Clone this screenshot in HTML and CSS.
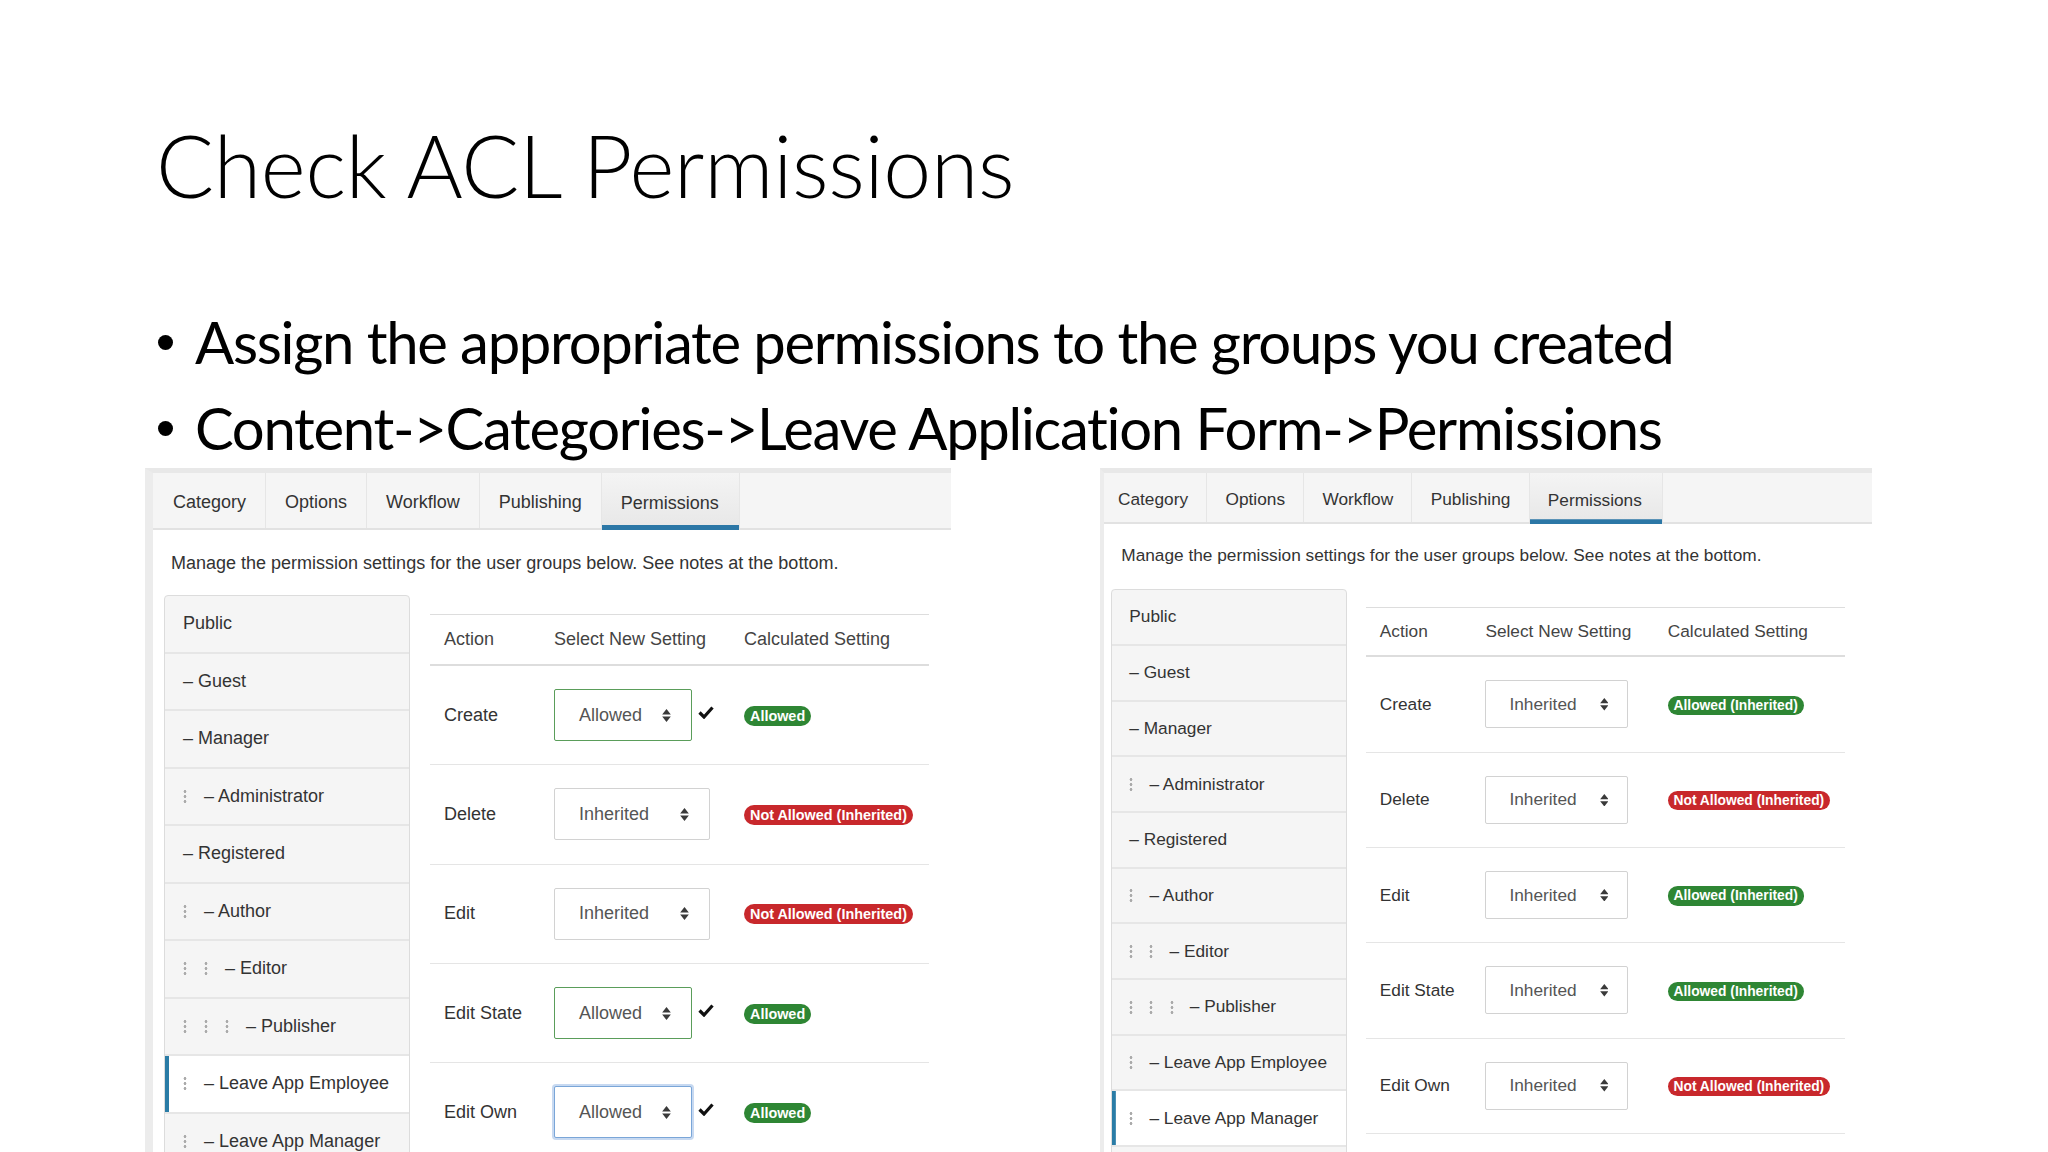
FILE: index.html
```html
<!DOCTYPE html>
<html lang="en">
<head>
<meta charset="utf-8">
<title>Check ACL Permissions</title>
<link rel="stylesheet" href="styles.css">
</head>
<body>
<div class="slide">
  <h1 class="title">Check ACL Permissions</h1>
  <ul class="bullets">
    <li><span class="dot"></span><span>Assign the appropriate permissions to the groups you created</span></li>
    <li><span class="dot"></span><span>Content-&gt;Categories-&gt;Leave Application Form-&gt;Permissions</span></li>
  </ul>

  <div class="shots">
    <!-- LEFT SCREENSHOT -->
    <section class="panel panel-left">
      <nav class="tabs">
        <span class="tab">Category</span>
        <span class="tab">Options</span>
        <span class="tab">Workflow</span>
        <span class="tab">Publishing</span>
        <span class="tab active">Permissions</span>
      </nav>
      <p class="desc">Manage the permission settings for the user groups below. See notes at the bottom.</p>
      <div class="perm">
        <ul class="groups">
          <li class="grp">Public</li>
          <li class="grp">&ndash; Guest</li>
          <li class="grp">&ndash; Manager</li>
          <li class="grp"><span class="gi"></span><span>&ndash; Administrator</span></li>
          <li class="grp">&ndash; Registered</li>
          <li class="grp"><span class="gi"></span><span>&ndash; Author</span></li>
          <li class="grp"><span class="gi"></span><span class="gi"></span><span>&ndash; Editor</span></li>
          <li class="grp"><span class="gi"></span><span class="gi"></span><span class="gi"></span><span>&ndash; Publisher</span></li>
          <li class="grp active"><span class="gi"></span><span>&ndash; Leave App Employee</span></li>
          <li class="grp"><span class="gi"></span><span>&ndash; Leave App Manager</span></li>
        </ul>
        <div class="acl">
          <div class="acl-row acl-head">
            <div class="cell">Action</div>
            <div class="cell">Select New Setting</div>
            <div class="cell">Calculated Setting</div>
          </div>
          <div class="acl-row">
            <div class="cell">Create</div>
            <div class="cell setting">
              <span class="sel sel-allowed">Allowed<svg class="caret" viewBox="0 0 8 12"><path d="M4 0L8 5H0Z M4 12L0 7H8Z"/></svg></span>
              <svg class="check" viewBox="0 0 16 13"><path d="M1.5 6.5L6 11L14.5 1.5"/></svg>
            </div>
            <div class="cell"><span class="badge badge-ok">Allowed</span></div>
          </div>
          <div class="acl-row">
            <div class="cell">Delete</div>
            <div class="cell setting">
              <span class="sel sel-inh">Inherited<svg class="caret" viewBox="0 0 8 12"><path d="M4 0L8 5H0Z M4 12L0 7H8Z"/></svg></span>
            </div>
            <div class="cell"><span class="badge badge-no">Not Allowed (Inherited)</span></div>
          </div>
          <div class="acl-row">
            <div class="cell">Edit</div>
            <div class="cell setting">
              <span class="sel sel-inh">Inherited<svg class="caret" viewBox="0 0 8 12"><path d="M4 0L8 5H0Z M4 12L0 7H8Z"/></svg></span>
            </div>
            <div class="cell"><span class="badge badge-no">Not Allowed (Inherited)</span></div>
          </div>
          <div class="acl-row">
            <div class="cell">Edit State</div>
            <div class="cell setting">
              <span class="sel sel-allowed">Allowed<svg class="caret" viewBox="0 0 8 12"><path d="M4 0L8 5H0Z M4 12L0 7H8Z"/></svg></span>
              <svg class="check" viewBox="0 0 16 13"><path d="M1.5 6.5L6 11L14.5 1.5"/></svg>
            </div>
            <div class="cell"><span class="badge badge-ok">Allowed</span></div>
          </div>
          <div class="acl-row">
            <div class="cell">Edit Own</div>
            <div class="cell setting">
              <span class="sel sel-allowed sel-focus">Allowed<svg class="caret" viewBox="0 0 8 12"><path d="M4 0L8 5H0Z M4 12L0 7H8Z"/></svg></span>
              <svg class="check" viewBox="0 0 16 13"><path d="M1.5 6.5L6 11L14.5 1.5"/></svg>
            </div>
            <div class="cell"><span class="badge badge-ok">Allowed</span></div>
          </div>
        </div>
      </div>
    </section>

    <!-- RIGHT SCREENSHOT -->
    <section class="panel panel-right">
      <nav class="tabs">
        <span class="tab">Category</span>
        <span class="tab">Options</span>
        <span class="tab">Workflow</span>
        <span class="tab">Publishing</span>
        <span class="tab active">Permissions</span>
      </nav>
      <p class="desc">Manage the permission settings for the user groups below. See notes at the bottom.</p>
      <div class="perm">
        <ul class="groups">
          <li class="grp">Public</li>
          <li class="grp">&ndash; Guest</li>
          <li class="grp">&ndash; Manager</li>
          <li class="grp"><span class="gi"></span><span>&ndash; Administrator</span></li>
          <li class="grp">&ndash; Registered</li>
          <li class="grp"><span class="gi"></span><span>&ndash; Author</span></li>
          <li class="grp"><span class="gi"></span><span class="gi"></span><span>&ndash; Editor</span></li>
          <li class="grp"><span class="gi"></span><span class="gi"></span><span class="gi"></span><span>&ndash; Publisher</span></li>
          <li class="grp"><span class="gi"></span><span>&ndash; Leave App Employee</span></li>
          <li class="grp active"><span class="gi"></span><span>&ndash; Leave App Manager</span></li>
          <li class="grp"></li>
        </ul>
        <div class="acl">
          <div class="acl-row acl-head">
            <div class="cell">Action</div>
            <div class="cell">Select New Setting</div>
            <div class="cell">Calculated Setting</div>
          </div>
          <div class="acl-row">
            <div class="cell">Create</div>
            <div class="cell setting">
              <span class="sel sel-inh">Inherited<svg class="caret" viewBox="0 0 8 12"><path d="M4 0L8 5H0Z M4 12L0 7H8Z"/></svg></span>
            </div>
            <div class="cell"><span class="badge badge-ok">Allowed (Inherited)</span></div>
          </div>
          <div class="acl-row">
            <div class="cell">Delete</div>
            <div class="cell setting">
              <span class="sel sel-inh">Inherited<svg class="caret" viewBox="0 0 8 12"><path d="M4 0L8 5H0Z M4 12L0 7H8Z"/></svg></span>
            </div>
            <div class="cell"><span class="badge badge-no">Not Allowed (Inherited)</span></div>
          </div>
          <div class="acl-row">
            <div class="cell">Edit</div>
            <div class="cell setting">
              <span class="sel sel-inh">Inherited<svg class="caret" viewBox="0 0 8 12"><path d="M4 0L8 5H0Z M4 12L0 7H8Z"/></svg></span>
            </div>
            <div class="cell"><span class="badge badge-ok">Allowed (Inherited)</span></div>
          </div>
          <div class="acl-row">
            <div class="cell">Edit State</div>
            <div class="cell setting">
              <span class="sel sel-inh">Inherited<svg class="caret" viewBox="0 0 8 12"><path d="M4 0L8 5H0Z M4 12L0 7H8Z"/></svg></span>
            </div>
            <div class="cell"><span class="badge badge-ok">Allowed (Inherited)</span></div>
          </div>
          <div class="acl-row">
            <div class="cell">Edit Own</div>
            <div class="cell setting">
              <span class="sel sel-inh">Inherited<svg class="caret" viewBox="0 0 8 12"><path d="M4 0L8 5H0Z M4 12L0 7H8Z"/></svg></span>
            </div>
            <div class="cell"><span class="badge badge-no">Not Allowed (Inherited)</span></div>
          </div>
        </div>
      </div>
    </section>
  </div>
</div>
</body>
</html>
```

FILE: styles.css
```css
* { box-sizing: border-box; margin: 0; padding: 0; }

html, body {
  width: 2048px;
  height: 1152px;
  overflow: hidden;
  background: #ffffff;
}

body {
  font-family: "Lato", "Liberation Sans", sans-serif;
  color: #000;
  font-variant-ligatures: no-common-ligatures;
}

.slide {
  width: 2048px;
  height: 1152px;
  overflow: hidden;
}

/* ---------- slide text ---------- */
.title {
  font-family: "Lato", "Liberation Sans", sans-serif;
  font-weight: 300;
  font-size: 86px;
  line-height: 89px;
  letter-spacing: -0.3px;
  margin: 120px 0 0 156px;
  color: #000;
}

.bullets {
  list-style: none;
  margin: 90px 0 0 158px;
}

.bullets li {
  display: flex;
  align-items: center;
  height: 86px;
  font-size: 58px;
  line-height: 86px;
  letter-spacing: -1.3px;
  white-space: nowrap;
}

.dot {
  flex: none;
  width: 15px;
  height: 15px;
  border-radius: 50%;
  background: #000;
  margin-right: 22px;
}

/* ---------- screenshots ---------- */
.shots {
  display: flex;
  align-items: flex-start;
  gap: 149px;
  margin: -3px 0 0 145px;
}

.panel {
  --u: 1px;
  flex: none;
  height: 720px;
  background: #fff;
  border-top: 5px solid #e8e8e8;
  border-left: 8px solid #ececec;
  font-family: "Liberation Sans", Arial, sans-serif;
  font-size: calc(18 * var(--u));
  color: #333;
  overflow: hidden;
}

.panel-left { width: 806px; }

.panel-right {
  --u: 0.96px;
  width: 772px;
  border-left-width: 4px;
}

/* tabs */
.tabs {
  display: flex;
  height: calc(57 * var(--u));
  background: #f5f5f5;
  border-bottom: 2px solid #e2e2e2;
  padding-left: 1px;
}

.panel-right .tabs { height: 51px; }

.tab {
  display: flex;
  align-items: center;
  padding: calc(4 * var(--u)) calc(19 * var(--u)) 0;
  border-right: 1px solid #e6e6e6;
  color: #333;
}

.panel-right .tab:first-child { padding-left: 13px; }

.tab.active {
  padding-right: calc(20.5 * var(--u));
  background: linear-gradient(#f4f4f4, #e7e7e7);
  box-shadow: inset 0 calc(-5 * var(--u)) 0 #2c77a6;
  margin-bottom: -2px;
}

/* description */
.desc {
  padding: calc(20 * var(--u)) 0 0 calc(18 * var(--u));
  line-height: calc(26 * var(--u));
  color: #333;
}

/* permission area */
.perm {
  display: flex;
  align-items: flex-start;
  margin-top: calc(19 * var(--u));
  padding-left: calc(11 * var(--u));
}

.panel-right .perm { padding-left: 7px; margin-top: 21px; }

.groups {
  flex: none;
  list-style: none;
  width: calc(246 * var(--u));
  border: 1px solid #dcdcdc;
  border-radius: calc(4 * var(--u)) calc(4 * var(--u)) 0 0;
  background: #f5f5f5;
}

.grp {
  display: flex;
  align-items: center;
  height: calc(57.5 * var(--u));
  padding-left: calc(18 * var(--u));
  border-bottom: 2px solid #e6e6e6;
  color: #333;
  white-space: nowrap;
}

.panel-right .grp { height: 55.7px; }

.grp.active {
  background: #fff;
  box-shadow: inset calc(4 * var(--u)) 0 0 #2a7ca6;
}

.gi {
  flex: none;
  display: inline-block;
  width: calc(21 * var(--u));
  height: calc(15 * var(--u));
  background-image: radial-gradient(circle, #aaaaaa 1.1px, transparent 1.7px);
  background-size: 4px 5px;
  background-repeat: repeat-y;
  background-position: 0 0;
}

/* acl table */
.acl {
  flex: none;
  width: calc(499 * var(--u));
  margin: calc(19 * var(--u)) 0 0 calc(20 * var(--u));
}

.acl-row {
  display: grid;
  grid-template-columns: calc(110 * var(--u)) calc(190 * var(--u)) 1fr;
  align-items: center;
  height: calc(99.3 * var(--u));
  border-bottom: 1px solid #e5e5e5;
}

.acl-head {
  height: calc(52 * var(--u));
  border-top: 1px solid #dddddd;
  border-bottom: 2px solid #dddddd;
  color: #444;
}

.cell {
  padding-left: calc(14 * var(--u));
  white-space: nowrap;
  color: #333;
}

.acl-head .cell { color: #444; }

.setting {
  display: flex;
  align-items: center;
}

.sel {
  display: inline-flex;
  align-items: center;
  justify-content: space-between;
  height: calc(52 * var(--u));
  padding: 0 calc(20 * var(--u)) 0 calc(24 * var(--u));
  border: 1px solid #d2d2d2;
  border-radius: 2px;
  background: #fff;
  color: #555;
}

.sel-allowed {
  width: calc(138 * var(--u));
  border: 1.5px solid #5a9d5a;
}

.sel-inh { width: calc(156 * var(--u)); }

.panel-right .sel-inh { width: 143px; height: 48px; }

.sel-focus {
  border: 1.5px solid #7aa6d8;
  box-shadow: 0 0 0 2px rgba(130, 170, 225, 0.45);
}

.caret {
  flex: none;
  width: calc(9 * var(--u));
  height: calc(13 * var(--u));
  fill: #3a3a3a;
}

.check {
  flex: none;
  width: 16px;
  height: 13px;
  margin: -6px 0 0 6px;
  fill: none;
  stroke: #111;
  stroke-width: 3.2;
}

.badge {
  display: inline-block;
  height: calc(20 * var(--u));
  line-height: calc(20 * var(--u));
  padding: 0 calc(6 * var(--u));
  border-radius: calc(10 * var(--u));
  font-size: calc(14.4 * var(--u));
  font-weight: 700;
  color: #fff;
  white-space: nowrap;
}

.badge-ok { background: #2e8634; }
.badge-no { background: #c8282c; }
```
